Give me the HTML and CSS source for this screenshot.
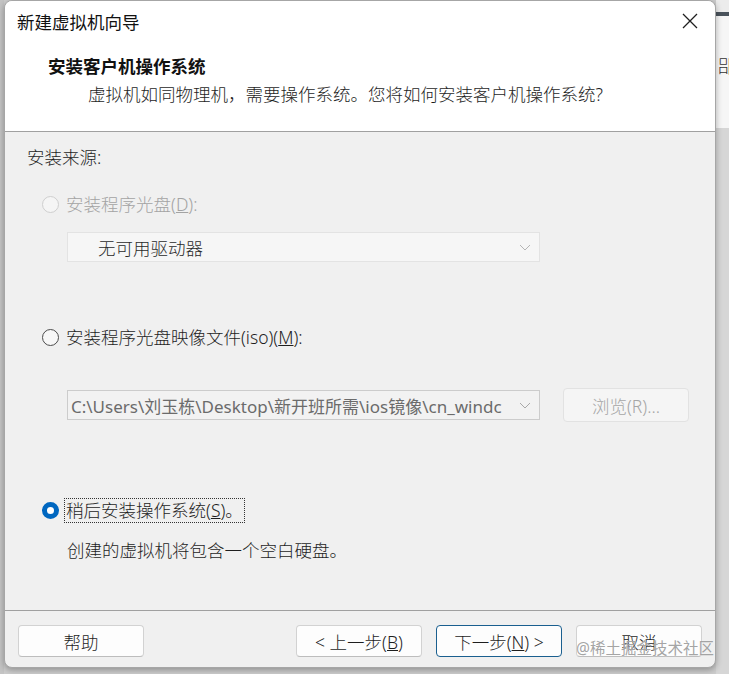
FILE: index.html
```html
<!DOCTYPE html>
<html>
    <head>
        <meta charset="utf-8" />
        <link rel="stylesheet" href="styles.css">
    </head>
    <body class="desktop">
        <div class="edge-left"></div>

        <div class="wizard">
            <div class="titlebar">
                <span class="title">新建虚拟机向导</span>
                <svg class="close" width="16" height="16" viewBox="0 0 16 16">
                    <path d="M1 1 L15 15 M15 1 L1 15" stroke="#1f1f1f" stroke-width="1.3" fill="none"/>
                </svg>
            </div>

            <div class="header">
                <div class="heading">安装客户机操作系统</div>
                <div class="subheading">虚拟机如同物理机，需要操作系统。您将如何安装客户机操作系统?</div>
            </div>

            <div class="content">
                <div class="section-label">安装来源:</div>

                <div class="choice disabled first">
                    <span class="radio"></span>
                    <span class="label">安装程序光盘(<u>D</u>):</span>
                </div>
                <div class="combo plain">
                    <span class="combo-text">无可用驱动器</span>
                    <svg class="chevron" width="12" height="7" viewBox="0 0 12 7">
                        <path d="M1 1 L6 6 L11 1" stroke="#b5b5b5" stroke-width="1" fill="none"/>
                    </svg>
                </div>

                <div class="choice second">
                    <span class="radio"></span>
                    <span class="label">安装程序光盘映像文件(iso)(<u>M</u>):</span>
                </div>
                <div class="file-row">
                    <div class="combo path">
                        <span class="combo-text">C:\Users\刘玉栋\Desktop\新开班所需\ios镜像\cn_windc</span>
                        <svg class="chevron" width="12" height="7" viewBox="0 0 12 7">
                            <path d="M1 1 L6 6 L11 1" stroke="#a8a8a8" stroke-width="1" fill="none"/>
                        </svg>
                    </div>
                    <button class="btn browse" disabled>浏览(R)...</button>
                </div>

                <div class="choice checked third">
                    <span class="radio"></span>
                    <span class="label focus">稍后安装操作系统(<u>S</u>)。</span>
                </div>
                <div class="note">创建的虚拟机将包含一个空白硬盘。</div>
            </div>

            <div class="footer">
                <button class="btn">帮助</button>
                <div class="nav">
                    <button class="btn">&lt; 上一步(<u>B</u>)</button>
                    <button class="btn primary">下一步(<u>N</u>) &gt;</button>
                    <button class="btn">取消</button>
                </div>
            </div>
        </div>

        <div class="edge-right">
            <div class="strip-top"></div>
            <div class="strip-bar"></div>
            <div class="strip-page">
                <span class="peek">郘</span>
            </div>
        </div>

        <div class="watermark">@稀土掘金技术社区</div>
    </body>
</html>
```

FILE: styles.css
```css
* {
    padding: 0;
    margin: 0;
    box-sizing: border-box;
}

body.desktop {
    display: flex;
    height: 674px;
    overflow: hidden;
    background: #cdcdcd;
    font-family: "Noto Sans", "Noto Sans CJK SC", sans-serif;
    font-size: 17.5px;
    font-weight: 300;
    color: #1e1e1e;
    position: relative;
}

div.edge-left {
    width: 4px;
    flex-shrink: 0;
    height: 100%;
    background: #c4c4c4;
}

div.wizard {
    width: 712px;
    flex-shrink: 0;
    height: 668px;
    display: flex;
    flex-direction: column;
    border: 1px solid #a6a6a6;
    border-radius: 8px;
    overflow: hidden;
    background: #f0f0f0;
    box-shadow: 0 2px 6px rgba(0, 0, 0, 0.3);
    position: relative;
    z-index: 1;
}

div.titlebar {
    height: 40px;
    display: flex;
    align-items: center;
    justify-content: space-between;
    padding: 0 17px 0 12px;
    background: #ffffff;
}
span.title {
    font-weight: 400;
    color: #111;
}

div.header {
    height: 91px;
    background: #ffffff;
    border-bottom: 1px solid #a0a0a0;
    padding: 13px 0 0 43px;
}
div.heading {
    font-weight: 700;
    line-height: 24px;
    font-size: 17.5px;
    color: #111;
}
div.subheading {
    line-height: 24px;
    margin-top: 4px;
    padding-left: 40px;
}

div.content {
    flex-grow: 1;
    padding: 13px 0 0 22px;
}
div.section-label {
    line-height: 24px;
}

div.choice {
    display: flex;
    align-items: center;
    height: 24px;
    padding-left: 15px;
}
div.choice.first { margin-top: 23px; }
div.choice.second { margin-top: 63px; }
div.choice.third { margin-top: 76px; }

span.radio {
    width: 17px;
    height: 17px;
    border-radius: 50%;
    border: 1px solid #4c4c4c;
    background: #f7f7f7;
    margin-right: 6px;
    flex-shrink: 0;
}
div.choice.disabled span.radio {
    border-color: #cfcfcf;
    background: #f5f5f5;
}
div.choice.disabled span.label {
    color: #a3a3a3;
}
div.choice.checked span.radio {
    border: 5px solid #0067c0;
    background: #ffffff;
}
span.label {
    line-height: 24px;
    padding: 0 1px;
}
span.label.focus {
    outline: 1px dotted #333;
    outline-offset: 0;
    line-height: 23px;
}

div.combo {
    display: flex;
    align-items: center;
    justify-content: space-between;
    width: 473px;
    height: 30px;
    border: 1px solid #e3e3e3;
    background: #f6f6f6;
    overflow: hidden;
}
div.combo.plain {
    margin: 16px 0 0 40px;
    padding: 0 8px 0 30px;
}
div.combo.path {
    border-color: #cccccc;
    background: #f2f2f2;
    padding: 0 8px 0 3px;
}
span.combo-text {
    white-space: nowrap;
    overflow: hidden;
    flex-grow: 1;
    margin-right: 10px;
}
div.combo.plain span.combo-text {
    color: #2a2a2a;
}
div.combo.path span.combo-text {
    color: #6b6b6b;
    font-weight: 400;
    font-size: 17px;
}
svg.chevron {
    flex-shrink: 0;
}

div.file-row {
    display: flex;
    align-items: center;
    gap: 23px;
    margin: 39px 0 0 40px;
    height: 34px;
}

div.note {
    line-height: 24px;
    margin: 16px 0 0 40px;
}

div.footer {
    height: 57px;
    border-top: 1px solid #a0a0a0;
    display: flex;
    justify-content: space-between;
    padding: 14px 13px 0 13px;
}
div.nav {
    display: flex;
    gap: 14px;
}

button.btn {
    width: 126px;
    height: 32px;
    font-family: inherit;
    font-size: 17.5px;
    font-weight: 300;
    color: #1e1e1e;
    background: #fdfdfd;
    border: 1px solid #d2d2d2;
    border-bottom-color: #bdbdbd;
    border-radius: 4px;
}
button.btn.primary {
    border: 1px solid #1a5f8f;
}
button.btn.browse {
    height: 34px;
    color: #a6a6a6;
    background: #f5f5f5;
    border-color: #e2e2e2;
}

div.edge-right {
    flex-grow: 1;
    min-width: 0;
    overflow: hidden;
    display: flex;
    flex-direction: column;
    background: #d6d6d6;
}
div.strip-top {
    height: 12px;
    background: #ececec;
}
div.strip-bar {
    height: 4px;
    background: #4a535c;
}
div.strip-page {
    height: 112px;
    background: #f6f6f6;
    padding: 36px 0 0 2px;
    white-space: nowrap;
}
span.peek {
    font-size: 18px;
    color: #333;
}

div.watermark {
    position: absolute;
    left: 576px;
    top: 636px;
    z-index: 2;
    font-size: 15.5px;
    font-weight: 400;
    color: rgba(140, 140, 140, 0.8);
    text-shadow: 0 0 1px #fff;
}
```
